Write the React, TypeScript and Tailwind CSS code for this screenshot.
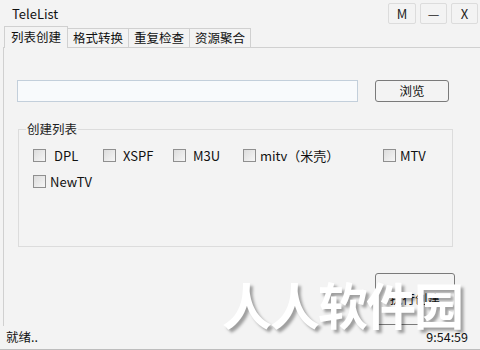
import React from "react";

const font = { fontFamily: '"Noto Sans CJK SC", "Noto Sans", sans-serif' };

function Cb({ label, className = "" }: { label: string; className?: string }) {
  return (
    <div className={"flex items-center " + className}>
      <span className="w-[13px] h-[13px] border border-[#8f8f8f] bg-gradient-to-br from-[#dcdcdc] to-[#f6f6f6] shrink-0" />
      <span className="ml-[6px] text-[13px] text-[#111] leading-none">{label}</span>
    </div>
  );
}

export default function App() {
  return (
    <div className="relative w-[480px] h-[350px] bg-[#f3f3f3] overflow-hidden flex flex-col" style={font}>
      {/* title bar */}
      <div className="h-[26px] flex items-center pl-[12px] pr-[2px]">
        <span className="text-[13px] text-[#111] leading-none">TeleList</span>
        <div className="ml-auto flex gap-[4px] self-start mt-[3px]">
          <div className="w-[28px] h-[21px] border border-[#dcdcdc] rounded-[2px] flex items-center justify-center text-[13px] text-[#222]">M</div>
          <div className="w-[27px] h-[21px] border border-[#dcdcdc] rounded-[2px] flex items-center justify-center text-[13px] text-[#222]">—</div>
          <div className="w-[27px] h-[21px] border border-[#dcdcdc] rounded-[2px] flex items-center justify-center text-[13px] text-[#222]">X</div>
        </div>
      </div>
      {/* tabs */}
      <div className="flex items-end h-[22px] pl-[4px] relative z-10">
        <div className="h-[22px] px-[6px] border border-[#d0d0d0] border-b-0 bg-[#f3f3f3] flex items-center text-[12.5px] text-[#111]">列表创建</div>
        <div className="h-[20px] px-[5px] border border-[#d0d0d0] border-l-0 bg-[#f3f3f3] flex items-center text-[12.5px] text-[#111]">格式转换</div>
        <div className="h-[20px] px-[5px] border border-[#d0d0d0] border-l-0 bg-[#f3f3f3] flex items-center text-[12.5px] text-[#111]">重复检查</div>
        <div className="h-[20px] px-[5px] border border-[#d0d0d0] border-l-0 bg-[#f3f3f3] flex items-center text-[12.5px] text-[#111]">资源聚合</div>
      </div>
      {/* panel */}
      <div className="flex-1 ml-[3px] border-l border-t border-[#d0d0d0] mt-[-1px] flex flex-col pl-[13px] pr-[26px] pt-[32px]">
        <div className="flex items-center">
          <div className="w-[341px] h-[22px] border border-[#c3cfdb] bg-[#f8fafc]" />
          <div className="ml-[17px] w-[74px] h-[22px] border border-[#7a7a7a] rounded-[3px] bg-[#f3f3f3] flex items-center justify-center text-[12.5px] text-[#111]">浏览</div>
        </div>
        <div className="relative mt-[27px] ml-[1px] w-[435px] h-[118px] border border-[#dcdcdc]">
          <span className="absolute left-[7px] top-[-10px] px-[1px] bg-[#f3f3f3] text-[12.5px] text-[#222] leading-[18px]">创建列表</span>
          <div className="flex items-center mt-[18px] ml-[14px] h-[14px]">
            <Cb label="DPL" className="w-[70px] [&>span:last-child]:ml-[8px]" />
            <Cb label="XSPF" className="w-[70px] [&>span:last-child]:ml-[7px]" />
            <Cb label="M3U" className="w-[70px] [&>span:last-child]:ml-[7px]" />
            <Cb label="mitv（米壳）" className="w-[140px] [&>span:last-child]:ml-[4px]" />
            <Cb label="MTV" className="[&>span:last-child]:ml-[4px]" />
          </div>
          <div className="flex items-center mt-[12px] ml-[14px] h-[14px]">
            <Cb label="NewTV" className="[&>span:last-child]:ml-[4px]" />
          </div>
        </div>
        <div className="flex justify-end mt-[26px] mr-[-1px]">
          <div className="w-[80px] h-[52px] border border-[#7a7a7a] rounded-[3px] bg-[#f3f3f3] flex items-center justify-center text-[12.5px] text-[#111]">执行创建</div>
        </div>
      </div>
      {/* status bar */}
      <div className="h-[24px] flex items-center px-[6px] border-b border-[#bdbdbd]">
        <span className="text-[12.5px] text-[#111]">就绪..</span>
        <span className="ml-auto mr-[6px] text-[12.5px] text-[#111]">9:54:59</span>
      </div>
      {/* watermark */}
      <div
        className="absolute left-[222px] top-[278px] text-[50px] font-bold text-white leading-none tracking-[-2px]"
        style={{ textShadow: "3px 3px 3px rgba(0,0,0,0.35)" }}
      >
        人人软件园
      </div>
    </div>
  );
}
